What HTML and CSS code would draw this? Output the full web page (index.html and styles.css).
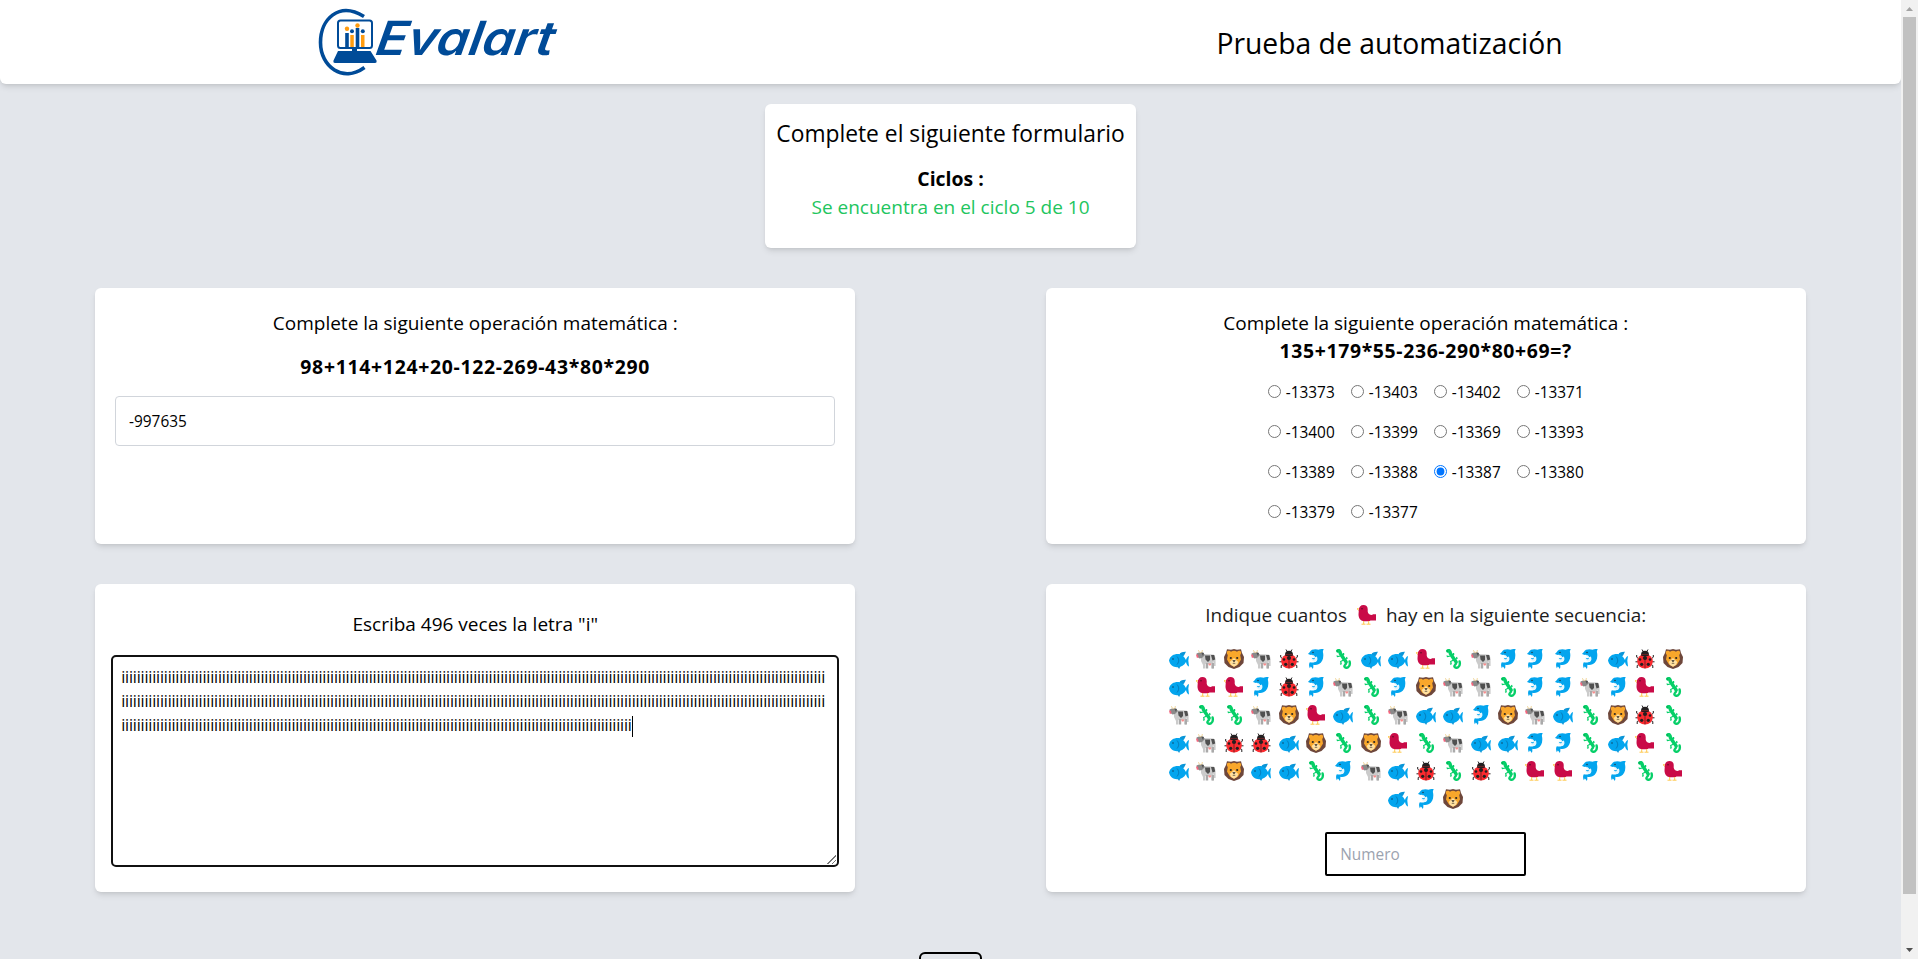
FILE: index.html
```html
<!DOCTYPE html>
<html lang="es">
<head>
<meta charset="utf-8">
<title>Prueba de automatización</title>
<link rel="stylesheet" href="styles.css">
</head>
<body>
<svg class="sprites" aria-hidden="true">
  <symbol id="fish" viewBox="0 0 20 20">
    <path d="M10.500 5.500C11 3.500 13 2.600 17 2.700C16.300 3.500 16.200 4.400 15 6.500L13 8z" fill="#0b96d8"/>
    <path d="M0 11.500C1 7 5 5 8.500 5C13 5 15 7.500 17 11C17.500 9 18.500 7.500 20 7L19.300 11.500L20 17.500C18.500 17 17.500 15.500 17 13C15 16.500 12 18.500 8 18.200C4 18 1 16 0 11.500z" fill="#03a5ee"/>
    <path d="M8.500 17.500l1.600 2.400 1.300-2.600z" fill="#0b96d8"/>
    <path d="M8 7.500c2.200 2.500 2.200 5.500 0 8" fill="none" stroke="#0873ad" stroke-width=".9"/>
    <circle cx="4" cy="10" r=".8" fill="#124663"/>
  </symbol>
  <symbol id="cow" viewBox="0 0 20 20">
    <path d="M5 5L17.500 5.500C19.500 6.500 19.500 9 19.600 13V17H18V12L17.500 14V19.500H15V15H9.500V19.500H7V16L5 12z" fill="#cbcbcb"/>
    <path d="M10 14h2.200v5.500H10zM16 14h2v5.500h-2z" fill="#aaa"/>
    <path d="M.5 4.500L3 3.500L7 4L9 6L6 9L3.500 9.500L1 7.500z" fill="#8a8a8a"/>
    <path d="M9 6.500h5v4.500l-2 2-2.500-2.500zM15 6h3.200l1 4.500-2.700 1zM5 3l3 1-1 3z" fill="#505050"/>
    <path d="M0 5.500l2 .2.500 3L.8 8.700z" fill="#f7637c"/>
    <path d="M2.500 1.200c0 1.500.7 2 2.500 2.300M6.200 1c.3 1.300 0 2-1 2.500" fill="none" stroke="#eccb83" stroke-width=".8"/>
    <path d="M12 14.500h3.500l-1 2h-1.500z" fill="#f78b8b"/>
  </symbol>
  <symbol id="lion" viewBox="0 0 20 20">
    <path d="M3 .3L7 .8L10 0L13 .8L17 .3L18 4L20 8L19.500 14L15.500 18L10 20L4.500 18L.5 14L0 8L2 4z" fill="#6e473b"/>
    <path d="M3.500 2C5 1.200 6.200 1.900 7 2.800Q10 .8 13 2.800C14 1.800 15.500 1.500 16.600 2.200C17.800 3.600 17 5 16.200 6L17 10.500L14 15.500L10 17.800L6 15.500L3 10.500L3.800 6C2.600 4.600 2.600 3 3.500 2z" fill="#f9a72b"/>
    <path d="M10 9L14.300 13L13 16L10 17.800L7 16L5.700 13z" fill="#ffe0a0"/>
    <circle cx="6.800" cy="9" r="1.100" fill="#2b2522"/><circle cx="13.200" cy="9" r="1.100" fill="#2b2522"/>
    <path d="M8.300 11.200h3.400L10 13.300zM8.300 14.500q1.700-1.500 3.400 0" fill="#2b2522"/>
  </symbol>
  <symbol id="bug" viewBox="0 0 20 20">
    <path d="M7 .5l1.800 3M13 .5l-1.800 3M1.700 6v2.200L4 10M18.300 6v2.200L16 10M.5 12.800H3M17 12.800h2.500M2.200 19v-2.500l2-1M17.800 19v-2.500l-2-1" fill="none" stroke="#231f20" stroke-width="1"/>
    <path d="M6 6Q6 1.800 10 1.800T14 6z" fill="#231f20"/>
    <ellipse cx="10" cy="12.300" rx="7.800" ry="7.300" fill="#fb2a2f"/>
    <path d="M5.500 6.500Q10 3.800 14.500 6.500Q10 7.500 5.500 6.500zM9.700 6h.6v13.500h-.6z" fill="#231f20"/>
    <circle cx="10" cy="9" r="2.100" fill="#231f20"/><circle cx="5" cy="10.500" r="1.300" fill="#231f20"/><circle cx="15" cy="10.500" r="1.300" fill="#231f20"/>
    <circle cx="6.700" cy="15.300" r="1.600" fill="#231f20"/><circle cx="13.300" cy="15.300" r="1.600" fill="#231f20"/>
  </symbol>
  <symbol id="dolphin" viewBox="0 0 20 20">
    <path d="M2 4.800C3.500 4.200 4 1.800 6 .8C8.500 -.1 11 .1 12.500 .8C14 0 15.500 0 17.800 .2C16.700 1.500 16.700 2.700 17.200 4.500C17.800 9.500 16 13.500 13 15C11 16 9 16.200 7.500 15.800C7 16.800 7.800 18.200 6.800 20C6.200 18.900 5.500 18 4.800 17.600L3.800 19.200C2.800 17 2.800 15 3.800 13.300L5.200 13.500C7 13.700 9 13.400 10 12.300L9.500 8.500L6 5.800C4.600 6 3 5.900 2 4.800z" fill="#03a5ee"/>
    <path d="M6.500 5.800C8 6.200 9 7 9 8.300L10.800 7.500C12 9.500 11.500 12 9.800 13C7.500 13 5.700 11.500 5 9.300C6 9.800 7.300 9.900 8.200 9.300z" fill="#e6f6fd"/>
    <path d="M5.800 8.800C6.800 9.400 8 9.400 9 8.800L8.300 10.300C7.300 10.400 6.300 10 5.800 8.800z" fill="#03a5ee"/>
    <circle cx="7" cy="3.500" r=".8" fill="#1d4052"/>
  </symbol>
  <symbol id="lizard" viewBox="0 0 20 20">
    <path d="M4.800 1.900C6 1.200 7.200 2 7.400 4.500L10 8.500C11 10.500 12.500 11.300 13 12.800" fill="none" stroke="#06cf68" stroke-width="3.500" stroke-linecap="round" stroke-linejoin="round"/>
    <path d="M13 13C14 15.500 10.600 16 11.500 17.700C13 19.700 18 18.800 16.600 12.500" fill="none" stroke="#06cf68" stroke-width="2.400" stroke-linecap="round"/>
    <path d="M7.500 7L4.500 7.500L3.800 6.500M8.500 6.500L10.700 5.300L10.500 4M10.500 11L7.700 12.500L8.200 14.800L7 15.200M12 10.500L14 9.500L13.500 8" fill="none" stroke="#06cf68" stroke-width="1.200"/>
    <circle cx="4.300" cy="1.900" r=".5" fill="#047a3d"/>
  </symbol>
  <symbol id="bird" viewBox="0 0 20 20">
    <path d="M6.700 15v4M11.700 15v4M4.500 19.200h4M9.500 19.200h4M1.800 3.700H0L2 5.600" fill="none" stroke="#ffc84e" stroke-width="1"/>
    <path d="M1.800 5C1.800 2 3.700 0 6.500 0C9 0 10.700 1.600 10.700 4V6.500C10.700 8.300 12.500 10 15 10L16 9.200H19V15.500H13.500C12.500 16.200 11 16.200 9.500 16.200H7.500C3.500 16.200 1.500 13 1.500 9.500z" fill="#c90b47"/>
    <circle cx="5" cy="3.700" r=".8" fill="#5b0a26"/>
  </symbol>
</svg>

<div class="page">
  <main class="content">
    <header class="header">
      <div class="header-cell">
        <svg class="logo" viewBox="0 0 240 72" role="img" aria-label="Evalart">
          <path d="M46 11.500C21 -4 2.500 14 2.500 37.500C2.500 62 25 78 46.500 62.500" transform="translate(0 -1)" fill="none" stroke="#004b98" stroke-width="3.600"/>
          <rect x="20" y="14.500" width="34" height="27.500" rx="2.500" fill="#fff" stroke="#004b98" stroke-width="2"/>
          <path d="M27.200 27h3.600v14h-3.600zM37.700 22h3.600v19h-3.600z" fill="#004b98"/>
          <path d="M32.300 29h3.500v12h-3.500zM43 29h3.500v12h-3.500z" fill="#ff9c10"/>
          <circle cx="29" cy="22.800" r="2.200" fill="#ff9c10"/><circle cx="39.500" cy="19.500" r="2.200" fill="#ff9c10"/>
          <circle cx="34" cy="25.200" r="2" fill="#004b98"/><circle cx="44.800" cy="25.200" r="2" fill="#004b98"/>
          <path d="M34 42h5v3h13.500L58.500 54.500Q59 57 57 57H17Q15 57 15.500 54.500L20 45h14z" fill="#004b98"/>
          <text class="logo-text" transform="skewX(-10)" x="65" y="49.500" textLength="178" lengthAdjust="spacingAndGlyphs">Evalart</text>
        </svg>
      </div>
      <div class="header-cell"><h1 class="title">Prueba de automatización</h1></div>
    </header>

    <section class="card intro">
      <h2 class="intro-title">Complete el siguiente formulario</h2>
      <p class="strong cycles">Ciclos :</p>
      <p class="text status">Se encuentra en el ciclo 5 de 10</p>
    </section>

    <div class="grid">
      <section class="card math">
        <p class="text">Complete la siguiente operación matemática :</p>
        <p class="strong sum">98+114+124+20-122-269-43*80*290</p>
        <input class="answer" type="text" value="-997635">
      </section>

      <section class="card choice">
        <p class="text">Complete la siguiente operación matemática :</p>
        <p class="strong product">135+179*55-236-290*80+69=?</p>
        <div class="options">
          <label class="option"><input type="radio" name="r">-13373</label>
          <label class="option"><input type="radio" name="r">-13403</label>
          <label class="option"><input type="radio" name="r">-13402</label>
          <label class="option"><input type="radio" name="r">-13371</label>
          <label class="option"><input type="radio" name="r">-13400</label>
          <label class="option"><input type="radio" name="r">-13399</label>
          <label class="option"><input type="radio" name="r">-13369</label>
          <label class="option"><input type="radio" name="r">-13393</label>
          <label class="option"><input type="radio" name="r">-13389</label>
          <label class="option"><input type="radio" name="r">-13388</label>
          <label class="option"><input type="radio" name="r" checked>-13387</label>
          <label class="option"><input type="radio" name="r">-13380</label>
          <label class="option"><input type="radio" name="r">-13379</label>
          <label class="option"><input type="radio" name="r">-13377</label>
        </div>
      </section>

      <section class="card letters">
        <p class="text repeat">Escriba 496 veces la letra "i"</p>
        <div class="area"><span id="typed"></span><span class="caret"></span></div>
      </section>

      <section class="card sequence">
        <p class="text question"><span>Indique cuantos</span><svg class="icon"><use href="#bird"/></svg><span>hay en la siguiente secuencia:</span></p>
        <div class="icons" id="icons"></div>
        <input class="number" type="text" placeholder="Numero">
      </section>
    </div>
    <button class="send" type="button"></button>
  </main>

  <div class="scrollbar">
    <svg class="arrow" viewBox="0 0 17 17"><path d="M5 11L8.500 7L12 11z" fill="#a3a3a3"/></svg>
    <div class="thumb"></div>
    <svg class="arrow" viewBox="0 0 17 17"><path d="M5 6L8.500 10L12 6z" fill="#505050"/></svg>
  </div>
</div>
<script src="script.js"></script>
</body>
</html>
```
FILE: styles.css
```css
* { box-sizing: border-box; margin: 0; padding: 0; }
body { font-family: "Open Sans", "Noto Sans", sans-serif; font-size: 16px; line-height: 24px; color: #000; overflow: hidden; }
.sprites { position: absolute; width: 0; height: 0; }
.page { display: flex; height: 959px; }
.content { width: 1901px; height: 959px; overflow: hidden; background: #e3e6eb; display: flex; flex-direction: column; align-items: center; }
.header { width: 100%; height: 84px; flex: none; display: grid; grid-template-columns: 876px 1fr; background: #fff; border-radius: 0 0 6px 6px; box-shadow: 0 4px 6px -1px rgba(0,0,0,.1), 0 2px 4px -2px rgba(0,0,0,.1); }
.header-cell { display: flex; justify-content: center; align-items: center; }
.logo { width: 240px; height: 72px; overflow: visible; }
.logo-text { font-family: Inter, Roboto, sans-serif; font-style: italic; font-weight: 600; font-size: 47px; fill: #004b98; }
.title { font-size: 28.3px; line-height: 36px; font-weight: 400; margin-top: 2px; margin-left: 2px; }
.card { background: #fff; border-radius: 6px; box-shadow: 0 4px 6px -1px rgba(0,0,0,.1), 0 2px 4px -2px rgba(0,0,0,.1); display: flex; flex-direction: column; align-items: center; }
.text, .strong { height: 28px; padding-top: 1px; font-size: 19px; line-height: 28px; white-space: nowrap; }
.strong { font-size: 19.4px; font-weight: 700; }
.intro { width: 371px; height: 144px; flex: none; margin: 20px 0 40px; padding-top: 14px; }
.intro-title { font-size: 22.8px; line-height: 32px; font-weight: 400; margin-bottom: 14px; white-space: nowrap; }
.status { color: #22c55e; }
.grid { width: 100%; flex: none; display: grid; grid-template-columns: 1fr 1fr; grid-template-rows: 256px 308px; row-gap: 40px; justify-items: center; }
.grid .card { width: 80%; }
.math { padding: 20px; }
.sum { margin: 16px 0; letter-spacing: .7px; }
.product { letter-spacing: .64px; }
.answer { width: 100%; height: 50px; border: 1px solid #d1d5db; border-radius: 4px; padding: 0 13px; font: 15.4px "Open Sans", sans-serif; }
.choice { padding-top: 20px; }
.options { display: grid; grid-template-columns: repeat(4, 67px); gap: 16px; margin-top: 16px; }
.option { display: flex; align-items: center; gap: 5px; height: 24px; padding-top: 1px; font-size: 15.4px; white-space: nowrap; }
.option input { width: 13px; height: 13px; margin-top: -2px; }
.letters { padding: 25px 16px 0; }
.area { width: 728px; height: 212px; margin-top: 18px; border: 2px solid #111; border-radius: 5px; padding: 8px 10px 8px 8px; font-size: 16px; letter-spacing: -.172px; word-break: break-all; background: linear-gradient(135deg, transparent 50%, #777 50%, #777 58%, transparent 58%, transparent 75%, #777 75%, #777 83%, transparent 83%) no-repeat right 1px bottom 1px / 9px 9px; }
.caret { display: inline-block; width: 1px; height: 21px; margin: -5px 0 -5px; background: #000; vertical-align: middle; }
.sequence { padding-top: 16px; }
.question { display: flex; justify-content: center; color: #1c1c1c; font-size: 18.9px; }
.icon { width: 20px; height: 20px; display: block; flex: none; }
.question .icon { margin: 4px 9px 0 10px; }
.icons { display: flex; flex-wrap: wrap; justify-content: center; gap: 8px 7.450px; width: 520px; margin-top: 21px; }
.number { width: 201px; height: 44px; margin-top: 23px; border: 2px solid #000; border-radius: 2px; padding: 0 13px; font: 15.4px "Open Sans", sans-serif; }
.number::placeholder { color: #9ca3af; }
.send { width: 63px; height: 44px; flex: none; margin-top: 60px; border: 2px solid #000; border-radius: 6px; background: transparent; }
.scrollbar { width: 17px; flex: none; background: #f1f1f1; display: flex; flex-direction: column; align-items: center; }
.arrow { width: 17px; height: 17px; flex: none; }
.thumb { width: 13px; height: 877px; margin-bottom: 48px; background: #c1c1c1; }
```
FILE: script.js
```js
document.getElementById('typed').textContent = 'i'.repeat(496);

const names = { f: 'fish', c: 'cow', l: 'lion', b: 'bug', d: 'dolphin', g: 'lizard', r: 'bird' };
const rows = ['fclcbdgffrgcddddfbl', 'frrdbdcgdlccgddcdrg', 'cggclrfgcffdlcfglbg', 'fcbbflglrgcffddgfrg', 'fclffgdcfbgbgrrddgr', 'fdl'];
document.getElementById('icons').innerHTML = [...rows.join('')]
  .map(key => `<svg class="icon"><use href="#${names[key]}"/></svg>`).join('');
```
